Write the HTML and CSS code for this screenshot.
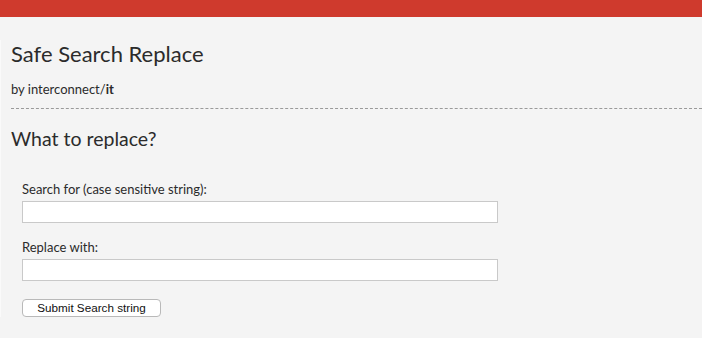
FILE: index.html
```html
<!DOCTYPE html>
<html lang="en">
<head>
    <meta charset="UTF-8">
    <title>Safe Search Replace</title>
    <link rel="stylesheet" href="styles.css">
</head>
<body>
<div class="top-bar"></div>
<div class="page">
    <h1 class="page-title">Safe Search Replace</h1>
    <p class="byline">by interconnect/<strong>it</strong></p>
    <hr class="divider">
    <h2 class="section-title">What to replace?</h2>
    <form class="replace-form" action="" method="post">
        <label class="field-label" for="srch">Search for (case sensitive string):</label>
        <input class="text-field" type="text" id="srch" name="srch">
        <label class="field-label" for="rplc">Replace with:</label>
        <input class="text-field" type="text" id="rplc" name="rplc">
        <button class="submit-button" type="submit">Submit Search string</button>
    </form>
</div>
</body>
</html>
```

FILE: styles.css
```css
html, body {
    margin: 0;
    padding: 0;
}

body {
    background-color: #f4f4f4;
    color: #2b2b2b;
    font-family: Lato, "Noto Sans", sans-serif;
    height: 338px;
    overflow: hidden;
}

.top-bar {
    height: 17px;
    background-color: #cf3a2d;
}

.page {
    padding-left: 11px;
    border-left: 1px solid #fafafa;
    margin-left: 0;
}

.page-title {
    margin: 23px 0 0 -1px;
    font-size: 22px;
    line-height: 28px;
    font-weight: normal;
}

.byline {
    margin: 13px 0 0 -1px;
    font-size: 13px;
    line-height: 16px;
}

.byline strong {
    font-weight: bold;
}

.divider {
    margin: 11px 0 0 -1px;
    border: none;
    border-top: 1px dashed #9a9a9a;
    height: 0;
}

.section-title {
    margin: 18px 0 0 -1px;
    font-size: 19.5px;
    line-height: 24px;
    font-weight: normal;
}

.replace-form {
    display: flex;
    flex-direction: column;
    align-items: flex-start;
    padding: 30px 0 0 10px;
}

.field-label {
    font-size: 13px;
    line-height: 16px;
}

.text-field {
    box-sizing: border-box;
    width: 476px;
    height: 22px;
    margin: 4px 0 16px 0;
    padding: 0 4px;
    border: 1px solid #c9c9c9;
    background-color: #ffffff;
    outline: none;
}

.text-field:last-of-type {
    margin-bottom: 18px;
}

.submit-button {
    box-sizing: border-box;
    width: 139px;
    height: 18px;
    padding: 0;
    border: 1px solid #b9b9b9;
    border-radius: 4px;
    background-color: #ffffff;
    color: #111111;
    font-family: "Liberation Sans", Arial, sans-serif;
    font-size: 11.7px;
    line-height: 16px;
}
```
